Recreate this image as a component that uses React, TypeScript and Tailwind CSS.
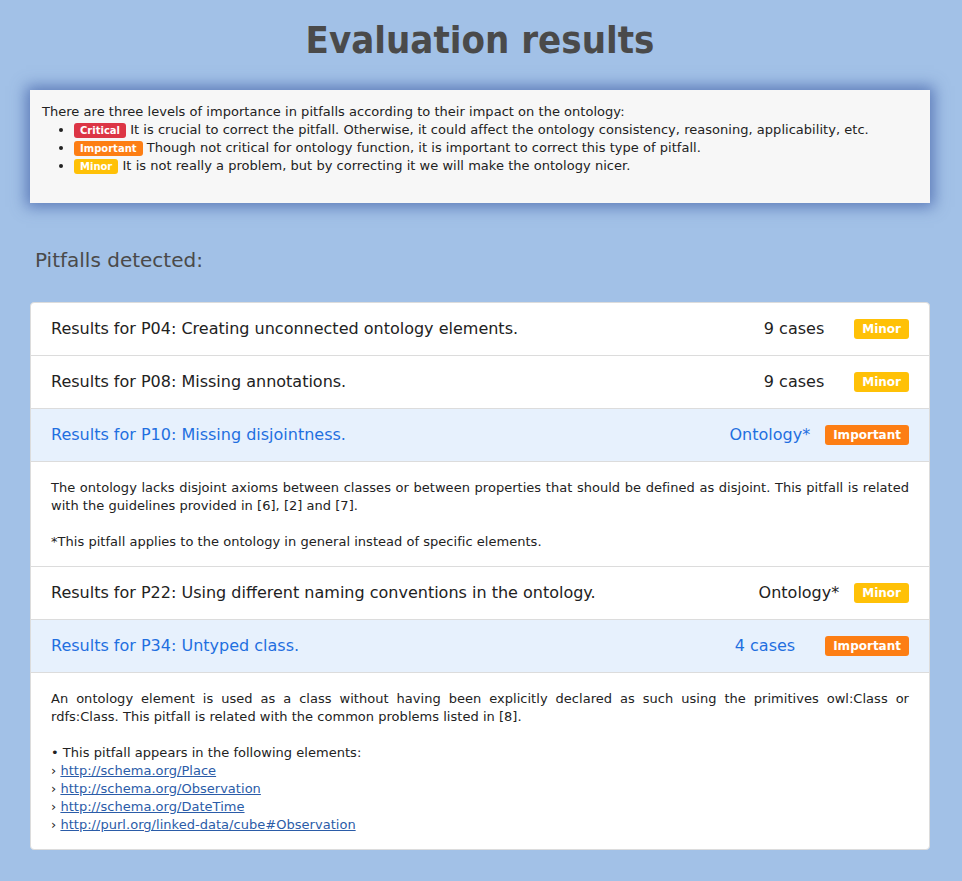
import React from "react";

type Level = "Critical" | "Important" | "Minor";

const badgeColor: Record<Level, string> = {
  Critical: "bg-[#dc3545]",
  Important: "bg-[#fd7e14]",
  Minor: "bg-[#ffc107]",
};

function Badge({ level, small }: { level: Level; small?: boolean }) {
  return (
    <span
      className={`${badgeColor[level]} inline-block rounded-[3px] font-bold tracking-normal text-white ${
        small ? "px-[6px] text-[10px] leading-[15px]" : "px-[8px] text-[12px] leading-[20px]"
      }`}
    >
      {level}
    </span>
  );
}

type Pitfall = {
  title: string;
  count: string;
  level: Level;
  open?: boolean;
  ontology?: boolean;
  body?: React.ReactNode;
};

const pitfalls: Pitfall[] = [
  { title: "Results for P04: Creating unconnected ontology elements.", count: "9 cases", level: "Minor" },
  { title: "Results for P08: Missing annotations.", count: "9 cases", level: "Minor" },
  {
    title: "Results for P10: Missing disjointness.",
    count: "Ontology*",
    ontology: true,
    level: "Important",
    open: true,
    body: (
      <>
        <p className="text-justify">
          The ontology lacks disjoint axioms between classes or between properties that should be defined as
          disjoint. This pitfall is related with the guidelines provided in [6], [2] and [7].
        </p>
        <p className="mt-[18px]">*This pitfall applies to the ontology in general instead of specific elements.</p>
      </>
    ),
  },
  {
    title: "Results for P22: Using different naming conventions in the ontology.",
    count: "Ontology*",
    ontology: true,
    level: "Minor",
  },
  {
    title: "Results for P34: Untyped class.",
    count: "4 cases",
    level: "Important",
    open: true,
    body: (
      <>
        <p className="text-justify">
          An ontology element is used as a class without having been explicitly declared as such using the
          primitives owl:Class or rdfs:Class. This pitfall is related with the common problems listed in [8].
        </p>
        <p className="mt-[18px]">&bull; This pitfall appears in the following elements:</p>
        {[
          "http://schema.org/Place",
          "http://schema.org/Observation",
          "http://schema.org/DateTime",
          "http://purl.org/linked-data/cube#Observation",
        ].map((u) => (
          <div key={u}>
            &rsaquo;{" "}
            <a href="#" className="text-[#2b5ca8] underline">
              {u}
            </a>
          </div>
        ))}
      </>
    ),
  },
];

export default function App() {
  return (
    <div className="min-h-screen bg-[#a2c1e7] pb-[31px] pl-[30px] pr-[32px] pt-[17px] font-['DejaVu_Sans',sans-serif] text-[#222]">
      <h1 className="text-center font-['DejaVu_Sans_Condensed','DejaVu_Sans',sans-serif] text-[38px] font-bold leading-[46px] text-[#4a4a4a]">
        Evaluation results
      </h1>

      <div className="mt-[27px] bg-[#f7f7f7] px-[12px] pb-[28px] pt-[13px] text-[13px] leading-[18px] tracking-[0.03px] shadow-[0_0_14px_4px_rgba(70,100,170,0.75)]">
        <p>There are three levels of importance in pitfalls according to their impact on the ontology:</p>
        <ul className="ml-[32px] list-disc">
          <li>
            <Badge level="Critical" small /> It is crucial to correct the pitfall. Otherwise, it could affect the
            ontology consistency, reasoning, applicability, etc.
          </li>
          <li>
            <Badge level="Important" small /> Though not critical for ontology function, it is important to correct
            this type of pitfall.
          </li>
          <li>
            <Badge level="Minor" small /> It is not really a problem, but by correcting it we will make the ontology
            nicer.
          </li>
        </ul>
      </div>

      <h2 className="mt-[43px] pl-[5px] text-[20px] leading-[28px] text-[#4a4a4a]">Pitfalls detected:</h2>

      <div className="mt-[28px] overflow-hidden rounded-[4px] border border-[#dcdcdc] bg-white">
        {pitfalls.map((p, i) => (
          <div key={p.title} className={i > 0 ? "border-t border-[#dcdcdc]" : ""}>
            <div
              className={`flex h-[52px] items-center px-[20px] text-[16px] ${
                p.open ? "bg-[#e7f1fd] text-[#1f6fe0]" : "text-[#222]"
              }`}
            >
              <span className="flex-1">{p.title}</span>
              <span className={p.ontology ? "mr-[15px]" : "mr-[30px]"}>{p.count}</span>
              <Badge level={p.level} />
            </div>
            {p.open && (
              <div className="border-t border-[#dcdcdc] px-[20px] pb-[15px] pt-[17px] text-[13px] leading-[18px] tracking-[0.03px]">
                {p.body}
              </div>
            )}
          </div>
        ))}
      </div>
    </div>
  );
}
